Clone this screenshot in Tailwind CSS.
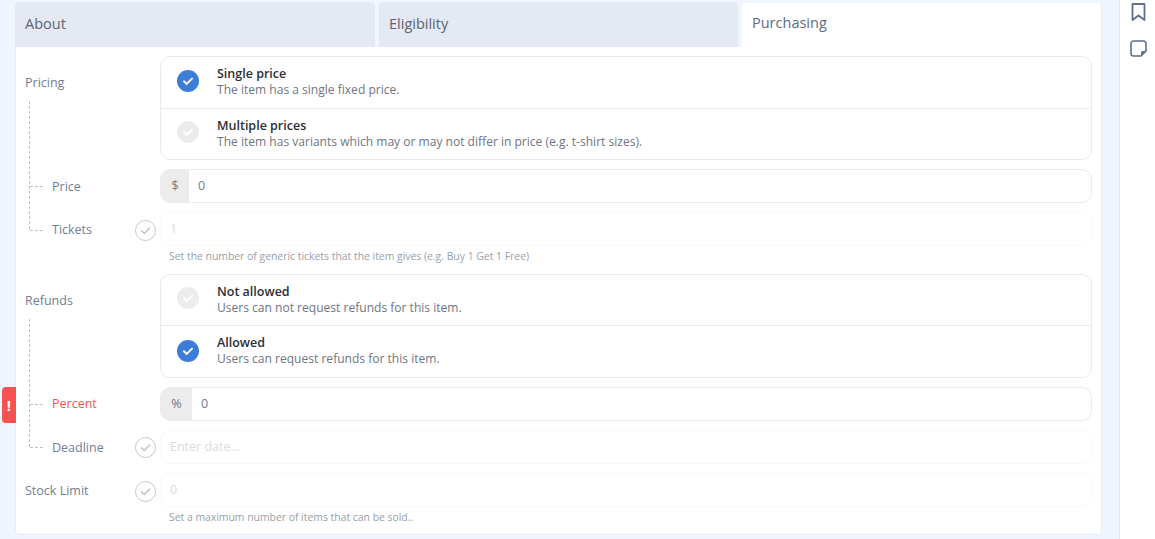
<!DOCTYPE html>
<html lang="en">
<head>
<meta charset="UTF-8" />
<meta name="viewport" content="width=device-width, initial-scale=1" />
<title>Purchasing</title>
<script src="https://cdn.jsdelivr.net/npm/@tailwindcss/browser@4"></script>
</head>
<body class="h-[539px] overflow-hidden bg-[#f1f5fe] font-['Open_Sans',sans-serif] text-[#718096]">
<div class="flex h-[539px]">

  <!-- MAIN -->
  <main class="relative w-[1119px] shrink-0 pl-[15px] pr-[17px] pt-[2px]">

    <!-- error flag -->
    <div class="absolute left-[2px] top-[387px] flex h-[36px] w-[14px] items-center justify-center rounded-l-[4px] bg-[#f65252] text-[15px] font-bold text-white">!</div>

    <div class="h-[533px] rounded-[4px] border-b border-r border-[#e8ebf2] bg-white shadow-[inset_1px_0_0_#e8ebf2]">
      <!-- TABS -->
      <div class="flex h-[45px] gap-[4px] bg-[#f1f5fe]">
        <div class="flex w-[360px] items-center rounded-t-[4px] bg-[#e5e9f3] pb-[2px] pl-[10px] text-[14.5px] text-[#5e6470]">About</div>
        <div class="flex w-[359px] items-center rounded-t-[4px] bg-[#e5e9f3] pb-[2px] pl-[10px] text-[14.5px] text-[#5e6470]">Eligibility</div>
        <div class="mt-[1px] flex w-[359px] items-center rounded-t-[4px] bg-white pb-[4px] pl-[10px] text-[14.5px] text-[#5e6b80]">Purchasing</div>
      </div>

      <div class="relative pl-[145px] pr-[9px] pt-[9px]">
        <!-- dashed tree lines -->
        <svg class="absolute left-[14px] top-[54px]" width="16" height="130" viewBox="0 0 16 130"><path d="M.5 0V129M1 85.500H14M1 129.500H14" fill="none" stroke="#c2c2c2" stroke-dasharray="3 2"/></svg>
        <svg class="absolute left-[14px] top-[272px]" width="16" height="130" viewBox="0 0 16 130"><path d="M.5 0V128M1 85.500H14M1 128.500H14" fill="none" stroke="#c2c2c2" stroke-dasharray="3 2"/></svg>

        <!-- Pricing -->
        <div class="relative">
          <span class="absolute left-[-135px] top-[18px] text-[12.5px] leading-[17px]">Pricing</span>
          <div class="rounded-[10px] border border-[#ebebeb]">
            <div class="flex h-[52px] items-center border-b border-[#ebebeb] pb-[1px]">
              <svg class="ml-[16px] shrink-0 -translate-y-[1px]" width="22" height="22" viewBox="0 0 22 22"><circle cx="11" cy="11" r="11" fill="#3b7dd8"/><path d="M7 11.300l2.800 2.600L15 8.600" fill="none" stroke="#fff" stroke-width="2" stroke-linecap="round" stroke-linejoin="round"/></svg>
              <div class="ml-[18px]">
                <div class="text-[12.5px] font-[560] leading-[16px] text-[#2c2f36]">Single price</div>
                <div class="text-[12.05px] leading-[16px] text-[#6f7683]">The item has a single fixed price.</div>
              </div>
            </div>
            <div class="flex h-[50px] items-center">
              <svg class="ml-[16px] shrink-0 -translate-y-[2px]" width="22" height="22" viewBox="0 0 22 22"><circle cx="11" cy="11" r="11" fill="#ececec"/><path d="M7 11.300l2.800 2.600L15 8.600" fill="none" stroke="#fff" stroke-width="2" stroke-linecap="round" stroke-linejoin="round"/></svg>
              <div class="ml-[18px]">
                <div class="text-[12.5px] font-[560] leading-[16px] text-[#2c2f36]">Multiple prices</div>
                <div class="text-[12.05px] leading-[16px] text-[#6f7683]">The item has variants which may or may not differ in price (e.g. t-shirt sizes).</div>
              </div>
            </div>
          </div>
        </div>

        <!-- Price -->
        <div class="relative mt-[9px]">
          <span class="absolute left-[-108px] top-[9px] text-[12.5px] leading-[17px]">Price</span>
          <div class="flex h-[34px] overflow-hidden rounded-[10px] border border-[#ebebeb] text-[12.5px]">
            <div class="flex w-[28px] items-center justify-center bg-[#ececec] text-[#6f7683]">$</div>
            <div class="flex items-center pl-[9px] text-[#718096]">0</div>
          </div>
        </div>

        <!-- Tickets -->
        <div class="relative mt-[9px]">
          <span class="absolute left-[-108px] top-[9px] text-[12.5px] leading-[17px]">Tickets</span>
          <svg class="absolute left-[-25px] top-[8px]" width="22" height="22" viewBox="0 0 22 22"><circle cx="10.500" cy="10.500" r="10" fill="#fff" stroke="#c8c8c8" stroke-width="1"/><path d="M6.500 10.800l2.800 2.600L14.500 8.100" fill="none" stroke="#c8c8c8" stroke-width="1.600" stroke-linecap="round" stroke-linejoin="round"/></svg>
          <div class="flex h-[34px] items-center rounded-[10px] border border-[#f9f9f9] pl-[9px] text-[12.5px] text-[#dcdcdc]">1</div>
          <div class="mt-[3px] pl-[9px] text-[10.4px] leading-[14px] text-[#999fa9]">Set the number of generic tickets that the item gives (e.g. Buy 1 Get 1 Free)</div>
        </div>

        <!-- Refunds -->
        <div class="relative mt-[11px]">
          <span class="absolute left-[-135px] top-[18px] text-[12.5px] leading-[17px]">Refunds</span>
          <div class="rounded-[10px] border border-[#ebebeb]">
            <div class="flex h-[51px] items-center border-b border-[#ebebeb]">
              <svg class="ml-[16px] shrink-0 -translate-y-[2px]" width="22" height="22" viewBox="0 0 22 22"><circle cx="11" cy="11" r="11" fill="#ececec"/><path d="M7 11.300l2.800 2.600L15 8.600" fill="none" stroke="#fff" stroke-width="2" stroke-linecap="round" stroke-linejoin="round"/></svg>
              <div class="ml-[18px]">
                <div class="text-[12.5px] font-[560] leading-[16px] text-[#2c2f36]">Not allowed</div>
                <div class="text-[12.05px] leading-[16px] text-[#6f7683]">Users can not request refunds for this item.</div>
              </div>
            </div>
            <div class="flex h-[51px] items-center pb-[2px]">
              <svg class="ml-[16px] shrink-0" width="22" height="22" viewBox="0 0 22 22"><circle cx="11" cy="11" r="11" fill="#3b7dd8"/><path d="M7 11.300l2.800 2.600L15 8.600" fill="none" stroke="#fff" stroke-width="2" stroke-linecap="round" stroke-linejoin="round"/></svg>
              <div class="ml-[18px]">
                <div class="text-[12.5px] font-[560] leading-[16px] text-[#2c2f36]">Allowed</div>
                <div class="text-[12.05px] leading-[16px] text-[#6f7683]">Users can request refunds for this item.</div>
              </div>
            </div>
          </div>
        </div>

        <!-- Percent -->
        <div class="relative mt-[9px]">
          <span class="absolute left-[-108px] top-[8px] text-[12.5px] leading-[17px] text-[#f65252]">Percent</span>
          <div class="flex h-[34px] overflow-hidden rounded-[10px] border border-[#ebebeb] text-[12.5px]">
            <div class="flex w-[31px] items-center justify-center bg-[#ececec] text-[#6f7683]">%</div>
            <div class="flex items-center pl-[9px] text-[#718096]">0</div>
          </div>
        </div>

        <!-- Deadline -->
        <div class="relative mt-[9px]">
          <span class="absolute left-[-108px] top-[9px] text-[12.5px] leading-[17px]">Deadline</span>
          <svg class="absolute left-[-25px] top-[7px]" width="22" height="22" viewBox="0 0 22 22"><circle cx="10.500" cy="10.500" r="10" fill="#fff" stroke="#c8c8c8" stroke-width="1"/><path d="M6.500 10.800l2.800 2.600L14.500 8.100" fill="none" stroke="#c8c8c8" stroke-width="1.600" stroke-linecap="round" stroke-linejoin="round"/></svg>
          <div class="flex h-[34px] items-center rounded-[10px] border border-[#f9f9f9] pl-[9px] text-[12.5px] text-[#dcdcdc]">Enter date...</div>
        </div>

        <!-- Stock Limit -->
        <div class="relative mt-[9px]">
          <span class="absolute left-[-135px] top-[9px] text-[12.5px] leading-[17px]">Stock Limit</span>
          <svg class="absolute left-[-25px] top-[8px]" width="22" height="22" viewBox="0 0 22 22"><circle cx="10.500" cy="10.500" r="10" fill="#fff" stroke="#c8c8c8" stroke-width="1"/><path d="M6.500 10.800l2.800 2.600L14.500 8.100" fill="none" stroke="#c8c8c8" stroke-width="1.600" stroke-linecap="round" stroke-linejoin="round"/></svg>
          <div class="flex h-[34px] items-center rounded-[10px] border border-[#f9f9f9] pl-[9px] text-[12.5px] text-[#dcdcdc]">0</div>
          <div class="mt-[3px] pl-[9px] text-[10.4px] leading-[14px] text-[#999fa9]">Set a maximum number of items that can be sold..</div>
        </div>
      </div>
    </div>
  </main>

  <!-- SIDEBAR -->
  <aside class="flex flex-1 flex-col border-l border-[#dfe4ef] bg-white pl-[10px] pt-[3px]">
    <svg class="ml-[1px]" width="15" height="19" viewBox="0 0 15 19"><path d="M1.500 1h12v16l-6-4.500L1.500 17z" fill="none" stroke="#5f6f8c" stroke-width="1.800" stroke-linejoin="round"/></svg>
    <svg class="mt-[18px]" width="17" height="17" viewBox="0 0 17 17"><path d="M3.500 1h10A2.500 2.500 0 0 1 16 3.500V11l-5 5H3.500A2.500 2.500 0 0 1 1 13.500v-10A2.500 2.500 0 0 1 3.500 1z" fill="none" stroke="#5f6f8c" stroke-width="1.600"/><path d="M11 16v-3.500a1.500 1.500 0 0 1 1.500-1.500H16z" fill="#5f6f8c"/></svg>
  </aside>
</div>
</body>
</html>
